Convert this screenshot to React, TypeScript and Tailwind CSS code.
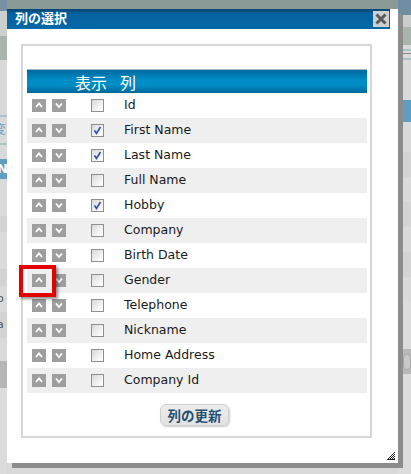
import React from "react";

const rows: { name: string; checked: boolean }[] = [
  { name: "Id", checked: false },
  { name: "First Name", checked: true },
  { name: "Last Name", checked: true },
  { name: "Full Name", checked: false },
  { name: "Hobby", checked: true },
  { name: "Company", checked: false },
  { name: "Birth Date", checked: false },
  { name: "Gender", checked: false },
  { name: "Telephone", checked: false },
  { name: "Nickname", checked: false },
  { name: "Home Address", checked: false },
  { name: "Company Id", checked: false },
];

function ArrowBtn({ up }: { up: boolean }) {
  return (
    <div className="w-[14px] h-[13px] bg-[#9e9e9e] flex items-center justify-center">
      <svg width="14" height="13" viewBox="0 0 14 13">
        <polyline
          points={up ? "4,8 7,4.5 10,8" : "4,4.5 7,8 10,4.5"}
          fill="none"
          stroke="#ffffff"
          strokeWidth="1.8"
        />
      </svg>
    </div>
  );
}

function CheckBox({ checked }: { checked: boolean }) {
  return (
    <div className="w-[13px] h-[13px] border border-[#8f8f8f] bg-[linear-gradient(135deg,#d8d8d8,#f6f6f6_70%,#ffffff)] flex items-center justify-center">
      {checked && (
        <svg width="11" height="11" viewBox="0 0 11 11">
          <path d="M2.5 5.5 L4.5 8.5 L8.5 2" fill="none" stroke="#3552a8" strokeWidth="1.7" />
        </svg>
      )}
    </div>
  );
}

export default function App() {
  return (
    <div className="relative w-[411px] h-[474px] overflow-hidden bg-[#dcdcdc] font-['DejaVu_Sans','Noto_Sans_CJK_JP',sans-serif]">
      {/* background page */}
      <div className="flex h-full">
        <div className="w-[7px] flex flex-col">
          <div className="h-[11px] bg-[#7591a3]" />
          <div className="h-[25px] bg-[#cbcfce]" />
          <div className="h-[24px] bg-[#a9b4ad]" />
          <div className="h-[55px] bg-[#d9d9d9]" />
          <div className="h-[2px] bg-[#a6c6c6]" />
          <div className="h-[26px] bg-[#d9d9d9] text-[12px] leading-[26px] text-[#6b9ec0] overflow-hidden">
            <span className="-ml-[6px]">変</span>
          </div>
          <div className="h-[2px] bg-[#a6c6c6]" />
          <div className="h-[14px] bg-[#d9d9d9]" />
          <div className="h-[20px] bg-[#5e9ebf] text-white text-[13px] font-bold leading-[20px] overflow-hidden">
            <span className="-ml-[3px]">N</span>
          </div>
          <div className="h-[37px] bg-[#dadada]" />
          <div className="h-[16px] bg-[#d3d3d3]" />
          <div className="h-[37px] bg-[#dadada]" />
          <div className="h-[17px] bg-[#d3d3d3]" />
          <div className="h-[26px] bg-[#dadada] text-[11px] leading-[26px] text-[#555] overflow-hidden">
            <span className="-ml-[3px]">o</span>
          </div>
          <div className="h-[26px] bg-[#d3d3d3] text-[11px] leading-[26px] text-[#555] overflow-hidden">
            <span className="-ml-[3px]">a</span>
          </div>
          <div className="h-[23px] bg-[#dadada]" />
          <div className="h-[27px] bg-[#b6b6b6]" />
          <div className="flex-1 bg-[#dcdcdc]" />
        </div>
        <div className="flex-1 flex flex-col">
          <div className="h-[12px] bg-[#8a9b97]" />
          <div className="flex-1 bg-[#d9d9d9]" />
        </div>
        <div className="w-[13px] flex flex-col">
          <div className="h-[15px] bg-[#6f8ea3]" />
          <div className="h-[12px] bg-[#c8cccb]" />
          <div className="h-[18px] bg-[#a9b4ad]" />
          <div className="h-[4px] bg-[#d9d9d9]" />
          <div className="h-[2px] bg-[#a6c6c6]" />
          <div className="h-[2px] bg-[#d9d9d9]" />
          <div className="h-[1px] bg-[#8c8c8c]" />
          <div className="h-[4px] bg-[#d9d9d9]" />
          <div className="h-[2px] bg-[#a6c6c6]" />
          <div className="h-[40px] bg-[#d9d9d9]" />
          <div className="h-[22px] bg-[#5e9ebf]" />
          <div className="h-[30px] bg-[#dadada]" />
          <div className="h-[25px] bg-[#d4d4d4]" />
          <div className="h-[25px] bg-[#dadada]" />
          <div className="h-[25px] bg-[#d4d4d4]" />
          <div className="h-[25px] bg-[#dadada]" />
          <div className="h-[25px] bg-[#d4d4d4]" />
          <div className="h-[25px] bg-[#dadada]" />
          <div className="h-[47px] bg-[#dcdcdc]" />
          <div className="h-[25px] bg-[#b8b8b8] flex items-center">
            <div className="ml-[5px] w-[14px] h-[16px] rounded-[4px] bg-[#c9c9c9] border border-[#a8a8a8]" />
          </div>
          <div className="flex-1 bg-[#dcdcdc]" />
        </div>
      </div>

      {/* modal shadow */}
      <div className="absolute left-[12px] top-[14px] w-[391px] h-[454px] bg-[#8c8c8c]" />

      {/* modal */}
      <div className="absolute left-[7px] top-[9px] w-[391px] h-[454px] bg-white flex flex-col">
        <div className="w-[383px] h-[20px] bg-[linear-gradient(#08446f,#0562a0_25%,#0668a8)] flex items-center justify-between pl-[8px] pr-[1px]">
          <span className="text-white font-bold text-[13px] leading-[16px] -mt-[3px] font-['Noto_Sans_CJK_JP',sans-serif]">
            列の選択
          </span>
          <div className="w-[16px] h-[16px] bg-[#cfcfcf] flex items-center justify-center">
            <svg width="16" height="16" viewBox="0 0 16 16">
              <path d="M3.5 3.5 L12.5 12.5 M12.5 3.5 L3.5 12.5" stroke="#5a5a5a" strokeWidth="3" />
            </svg>
          </div>
        </div>

        <div className="ml-[14px] mt-[15px] w-[351px] h-[394px] border-2 border-[#d6d6d6] pt-[23px] pl-[4px] flex flex-col">
          <div className="w-[340px]">
            <div className="h-[24px] border-t border-[#9fb3cb] bg-[linear-gradient(#006a9f,#008cc5_45%,#008ec7_65%,#00679a)] flex items-center text-white text-[16px] leading-[20px] font-['Noto_Sans_CJK_JP',sans-serif]">
              <span className="ml-[48px]">表示</span>
              <span className="ml-[13px]">列</span>
            </div>
            {rows.map((r, i) => (
              <div
                key={r.name}
                className={`h-[25px] flex items-center ${i % 2 === 1 ? "bg-[#efefef]" : "bg-white"}`}
              >
                <div className="ml-[5px] flex gap-[6px]">
                  <ArrowBtn up />
                  <ArrowBtn up={false} />
                </div>
                <div className="ml-[25px]">
                  <CheckBox checked={r.checked} />
                </div>
                <span className="ml-[20px] text-[12.5px] text-[#1a1a1a]">{r.name}</span>
              </div>
            ))}
          </div>
          <div className="mt-[11px] w-[340px] flex justify-center pr-[5px]">
            <button className="w-[69px] h-[22px] rounded-[6px] border border-[#cfcfcf] bg-[linear-gradient(#ececec,#e2e2e2)] shadow-[1px_1px_2px_rgba(0,0,0,0.2)] text-[#25506f] font-bold text-[13.5px] leading-[18px] font-['Noto_Sans_CJK_JP',sans-serif]">
              列の更新
            </button>
          </div>
        </div>

        {/* resize grip */}
        <svg className="absolute left-[380px] top-[443px]" width="8" height="8" viewBox="0 0 8 8">
          <rect x="7" y="0" width="1" height="1" fill="#222" />
          <rect x="6" y="1" width="1" height="1" fill="#222" />
          <rect x="5" y="2" width="1" height="1" fill="#222" />
          <rect x="7" y="2" width="1" height="1" fill="#222" />
          <rect x="4" y="3" width="1" height="1" fill="#222" />
          <rect x="6" y="3" width="1" height="1" fill="#222" />
          <rect x="3" y="4" width="1" height="1" fill="#222" />
          <rect x="5" y="4" width="1" height="1" fill="#222" />
          <rect x="7" y="4" width="1" height="1" fill="#222" />
          <rect x="2" y="5" width="1" height="1" fill="#222" />
          <rect x="4" y="5" width="1" height="1" fill="#222" />
          <rect x="6" y="5" width="1" height="1" fill="#222" />
          <rect x="1" y="6" width="1" height="1" fill="#222" />
          <rect x="3" y="6" width="1" height="1" fill="#222" />
          <rect x="5" y="6" width="1" height="1" fill="#222" />
          <rect x="7" y="6" width="1" height="1" fill="#222" />
          <rect x="0" y="7" width="8" height="1" fill="#222" />
        </svg>
      </div>

      {/* red highlight */}
      <div className="absolute left-[19px] top-[265px] w-[37px] h-[32px] border-4 border-[#e20000] shadow-[2px_2px_3px_rgba(0,0,0,0.45)]" />
    </div>
  );
}
